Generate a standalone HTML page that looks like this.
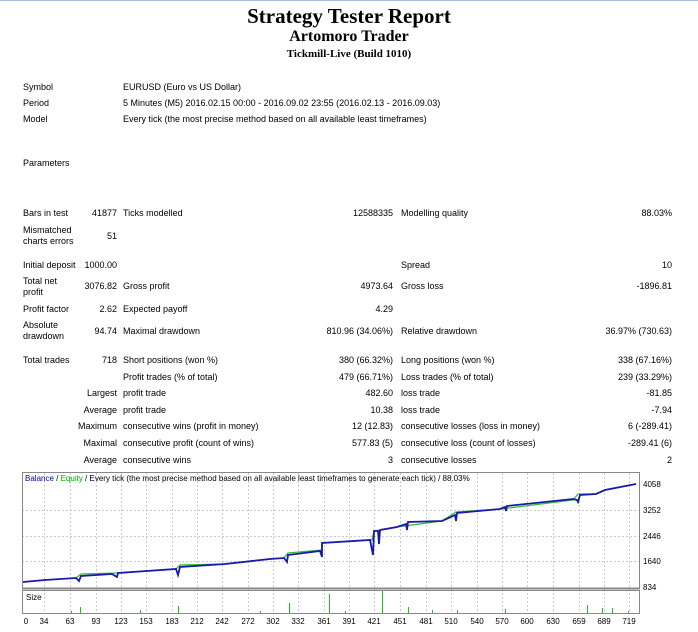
<!DOCTYPE html>
<html><head><meta charset="utf-8"><style>
body{margin:0;width:698px;height:632px;background:#fff;position:relative;overflow:hidden;font-family:"Liberation Sans",sans-serif;font-size:9px;color:#000}
.h{position:absolute;left:0;width:698px;text-align:center;font-family:"Liberation Serif",serif;font-weight:bold}
.t{position:absolute;white-space:nowrap;line-height:11px}
.r{position:absolute;white-space:nowrap;text-align:right;line-height:11px}
</style></head><body>
<div style="position:absolute;left:0;top:0;width:698px;height:1px;background:#aac0dd"></div>
<div class="h" style="top:4px;font-size:21px">Strategy Tester Report</div>
<div class="h" style="top:28px;font-size:16px">Artomoro Trader</div>
<div class="h" style="top:48px;font-size:11px">Tickmill-Live (Build 1010)</div>

<div class="t" style="left:23px;top:82px">Symbol</div><div class="t" style="left:123px;top:82px">EURUSD (Euro vs US Dollar)</div>
<div class="t" style="left:23px;top:98px">Period</div><div class="t" style="left:123px;top:98px">5 Minutes (M5) 2016.02.15 00:00 - 2016.09.02 23:55 (2016.02.13 - 2016.09.03)</div>
<div class="t" style="left:23px;top:114px">Model</div><div class="t" style="left:123px;top:114px">Every tick (the most precise method based on all available least timeframes)</div>
<div class="t" style="left:23px;top:158px">Parameters</div>

<div class="t" style="left:23px;top:208px">Bars in test</div><div class="r" style="right:581px;top:208px">41877</div>
<div class="t" style="left:123px;top:208px">Ticks modelled</div><div class="r" style="right:305px;top:208px">12588335</div>
<div class="t" style="left:401px;top:208px">Modelling quality</div><div class="r" style="right:26px;top:208px">88.03%</div>
<div class="t" style="left:23px;top:225px;line-height:11px">Mismatched<br>charts errors</div><div class="r" style="right:581px;top:231px">51</div>

<div class="t" style="left:23px;top:260px">Initial deposit</div><div class="r" style="right:581px;top:260px">1000.00</div>
<div class="t" style="left:401px;top:260px">Spread</div><div class="r" style="right:26px;top:260px">10</div>
<div class="t" style="left:23px;top:276px">Total net<br>profit</div><div class="r" style="right:581px;top:281px">3076.82</div>
<div class="t" style="left:123px;top:281px">Gross profit</div><div class="r" style="right:305px;top:281px">4973.64</div>
<div class="t" style="left:401px;top:281px">Gross loss</div><div class="r" style="right:26px;top:281px">-1896.81</div>
<div class="t" style="left:23px;top:304px">Profit factor</div><div class="r" style="right:581px;top:304px">2.62</div>
<div class="t" style="left:123px;top:304px">Expected payoff</div><div class="r" style="right:305px;top:304px">4.29</div>
<div class="t" style="left:23px;top:320px">Absolute<br>drawdown</div><div class="r" style="right:581px;top:326px">94.74</div>
<div class="t" style="left:123px;top:326px">Maximal drawdown</div><div class="r" style="right:305px;top:326px">810.96 (34.06%)</div>
<div class="t" style="left:401px;top:326px">Relative drawdown</div><div class="r" style="right:26px;top:326px">36.97% (730.63)</div>

<div class="t" style="left:23px;top:355px">Total trades</div><div class="r" style="right:581px;top:355px">718</div>
<div class="t" style="left:123px;top:355px">Short positions (won %)</div><div class="r" style="right:305px;top:355px">380 (66.32%)</div>
<div class="t" style="left:401px;top:355px">Long positions (won %)</div><div class="r" style="right:26px;top:355px">338 (67.16%)</div>
<div class="t" style="left:123px;top:372px">Profit trades (% of total)</div><div class="r" style="right:305px;top:372px">479 (66.71%)</div>
<div class="t" style="left:401px;top:372px">Loss trades (% of total)</div><div class="r" style="right:26px;top:372px">239 (33.29%)</div>
<div class="r" style="right:581px;top:388px">Largest</div><div class="t" style="left:123px;top:388px">profit trade</div><div class="r" style="right:305px;top:388px">482.60</div>
<div class="t" style="left:401px;top:388px">loss trade</div><div class="r" style="right:26px;top:388px">-81.85</div>
<div class="r" style="right:581px;top:405px">Average</div><div class="t" style="left:123px;top:405px">profit trade</div><div class="r" style="right:305px;top:405px">10.38</div>
<div class="t" style="left:401px;top:405px">loss trade</div><div class="r" style="right:26px;top:405px">-7.94</div>
<div class="r" style="right:581px;top:421px">Maximum</div><div class="t" style="left:123px;top:421px">consecutive wins (profit in money)</div><div class="r" style="right:305px;top:421px">12 (12.83)</div>
<div class="t" style="left:401px;top:421px">consecutive losses (loss in money)</div><div class="r" style="right:26px;top:421px">6 (-289.41)</div>
<div class="r" style="right:581px;top:438px">Maximal</div><div class="t" style="left:123px;top:438px">consecutive profit (count of wins)</div><div class="r" style="right:305px;top:438px">577.83 (5)</div>
<div class="t" style="left:401px;top:438px">consecutive loss (count of losses)</div><div class="r" style="right:26px;top:438px">-289.41 (6)</div>
<div class="r" style="right:581px;top:455px">Average</div><div class="t" style="left:123px;top:455px">consecutive wins</div><div class="r" style="right:305px;top:455px">3</div>
<div class="t" style="left:401px;top:455px">consecutive losses</div><div class="r" style="right:26px;top:455px">2</div>

<svg style="position:absolute;left:0;top:0" width="698" height="632" font-family="Liberation Sans, sans-serif" font-size="8">
<g stroke="#c8c8c8" stroke-dasharray="2,2" stroke-width="1">
<line x1="22" y1="510.5" x2="640" y2="510.5"/><line x1="22" y1="536.5" x2="640" y2="536.5"/><line x1="22" y1="561.5" x2="640" y2="561.5"/>
<line x1="44.5" y1="473" x2="44.5" y2="613"/><line x1="70.5" y1="473" x2="70.5" y2="613"/><line x1="96.5" y1="473" x2="96.5" y2="613"/><line x1="121.5" y1="473" x2="121.5" y2="613"/><line x1="146.5" y1="473" x2="146.5" y2="613"/><line x1="172.5" y1="473" x2="172.5" y2="613"/><line x1="197.5" y1="473" x2="197.5" y2="613"/><line x1="222.5" y1="473" x2="222.5" y2="613"/><line x1="248.5" y1="473" x2="248.5" y2="613"/><line x1="273.5" y1="473" x2="273.5" y2="613"/><line x1="298.5" y1="473" x2="298.5" y2="613"/><line x1="324.5" y1="473" x2="324.5" y2="613"/><line x1="349.5" y1="473" x2="349.5" y2="613"/><line x1="374.5" y1="473" x2="374.5" y2="613"/><line x1="400.5" y1="473" x2="400.5" y2="613"/><line x1="426.5" y1="473" x2="426.5" y2="613"/><line x1="451.5" y1="473" x2="451.5" y2="613"/><line x1="477.5" y1="473" x2="477.5" y2="613"/><line x1="502.5" y1="473" x2="502.5" y2="613"/><line x1="527.5" y1="473" x2="527.5" y2="613"/><line x1="553.5" y1="473" x2="553.5" y2="613"/><line x1="579.5" y1="473" x2="579.5" y2="613"/><line x1="604.5" y1="473" x2="604.5" y2="613"/><line x1="629.5" y1="473" x2="629.5" y2="613"/>
</g>
<rect x="22.5" y="472.5" width="617" height="116" fill="none" stroke="#888"/>
<rect x="22.5" y="590.5" width="617" height="23" fill="none" stroke="#888"/>
<line x1="22" y1="588.5" x2="640" y2="588.5" stroke="#888" stroke-width="2"/>
<text x="25" y="481"><tspan fill="#0000aa">Balance</tspan> / <tspan fill="#00aa00">Equity</tspan> / Every tick (the most precise method based on all available least timeframes to generate each tick) / 88.03%</text>
<polyline fill="none" stroke="#33bb33" stroke-width="1.3" points="76,578 81,574 117,573 176,569 180,565 225,564 270,559 284,558 288,553 322,550 322,543 372,540 374,531 397,527 442,521 456,512 501,509 573,500 578,494 596,494 605,490 636,484"/>
<polyline fill="none" stroke="#1a1aa8" stroke-width="1.8" points="23,582 45,580 76,578 79,581 81,576 112,574 117,577 118,573 176,569 178,575 180,567 225,564 270,559 284,558 287,562 288,555 320,551 322,557 322,543 370,540 373,555 374,531 378,531 379,544 380,530 397,527 406,524 407,530 408,522 442,521 455,515 456,521 457,513 500,509 505,507 506,511 507,506 573,499 577,500 578,502 580,495 596,494 605,490 636,484"/>
<g stroke="#22bb22" stroke-width="1">
<line x1="80.5" y1="613" x2="80.5" y2="607"/><line x1="178.5" y1="613" x2="178.5" y2="606"/><line x1="289.5" y1="613" x2="289.5" y2="603"/><line x1="329.5" y1="613" x2="329.5" y2="594"/><line x1="382.5" y1="613" x2="382.5" y2="591"/><line x1="408.5" y1="613" x2="408.5" y2="607"/><line x1="587.5" y1="613" x2="587.5" y2="605"/><line x1="602.5" y1="613" x2="602.5" y2="608"/><line x1="612.5" y1="613" x2="612.5" y2="608"/>
<line x1="71.5" y1="613" x2="71.5" y2="611"/><line x1="140.5" y1="613" x2="140.5" y2="610"/><line x1="260.5" y1="613" x2="260.5" y2="611"/><line x1="345.5" y1="613" x2="345.5" y2="611"/><line x1="432.5" y1="613" x2="432.5" y2="610"/><line x1="457.5" y1="613" x2="457.5" y2="610"/><line x1="505.5" y1="613" x2="505.5" y2="609"/><line x1="628.5" y1="613" x2="628.5" y2="611"/>
</g>
<text x="26" y="600">Size</text>
<g text-anchor="start"><text x="643" y="487">4058</text><text x="643" y="513">3252</text><text x="643" y="539">2446</text><text x="643" y="564">1640</text><text x="643" y="590">834</text></g>
<g text-anchor="middle"><text x="26" y="624">0</text><text x="44" y="624">34</text><text x="70" y="624">63</text><text x="96" y="624">93</text><text x="121" y="624">123</text><text x="146" y="624">153</text><text x="172" y="624">183</text><text x="197" y="624">212</text><text x="222" y="624">242</text><text x="248" y="624">272</text><text x="273" y="624">302</text><text x="298" y="624">332</text><text x="324" y="624">361</text><text x="349" y="624">391</text><text x="374" y="624">421</text><text x="400" y="624">451</text><text x="426" y="624">481</text><text x="451" y="624">510</text><text x="477" y="624">540</text><text x="502" y="624">570</text><text x="527" y="624">600</text><text x="553" y="624">630</text><text x="579" y="624">659</text><text x="604" y="624">689</text><text x="629" y="624">719</text></g>
</svg>
</body></html>
